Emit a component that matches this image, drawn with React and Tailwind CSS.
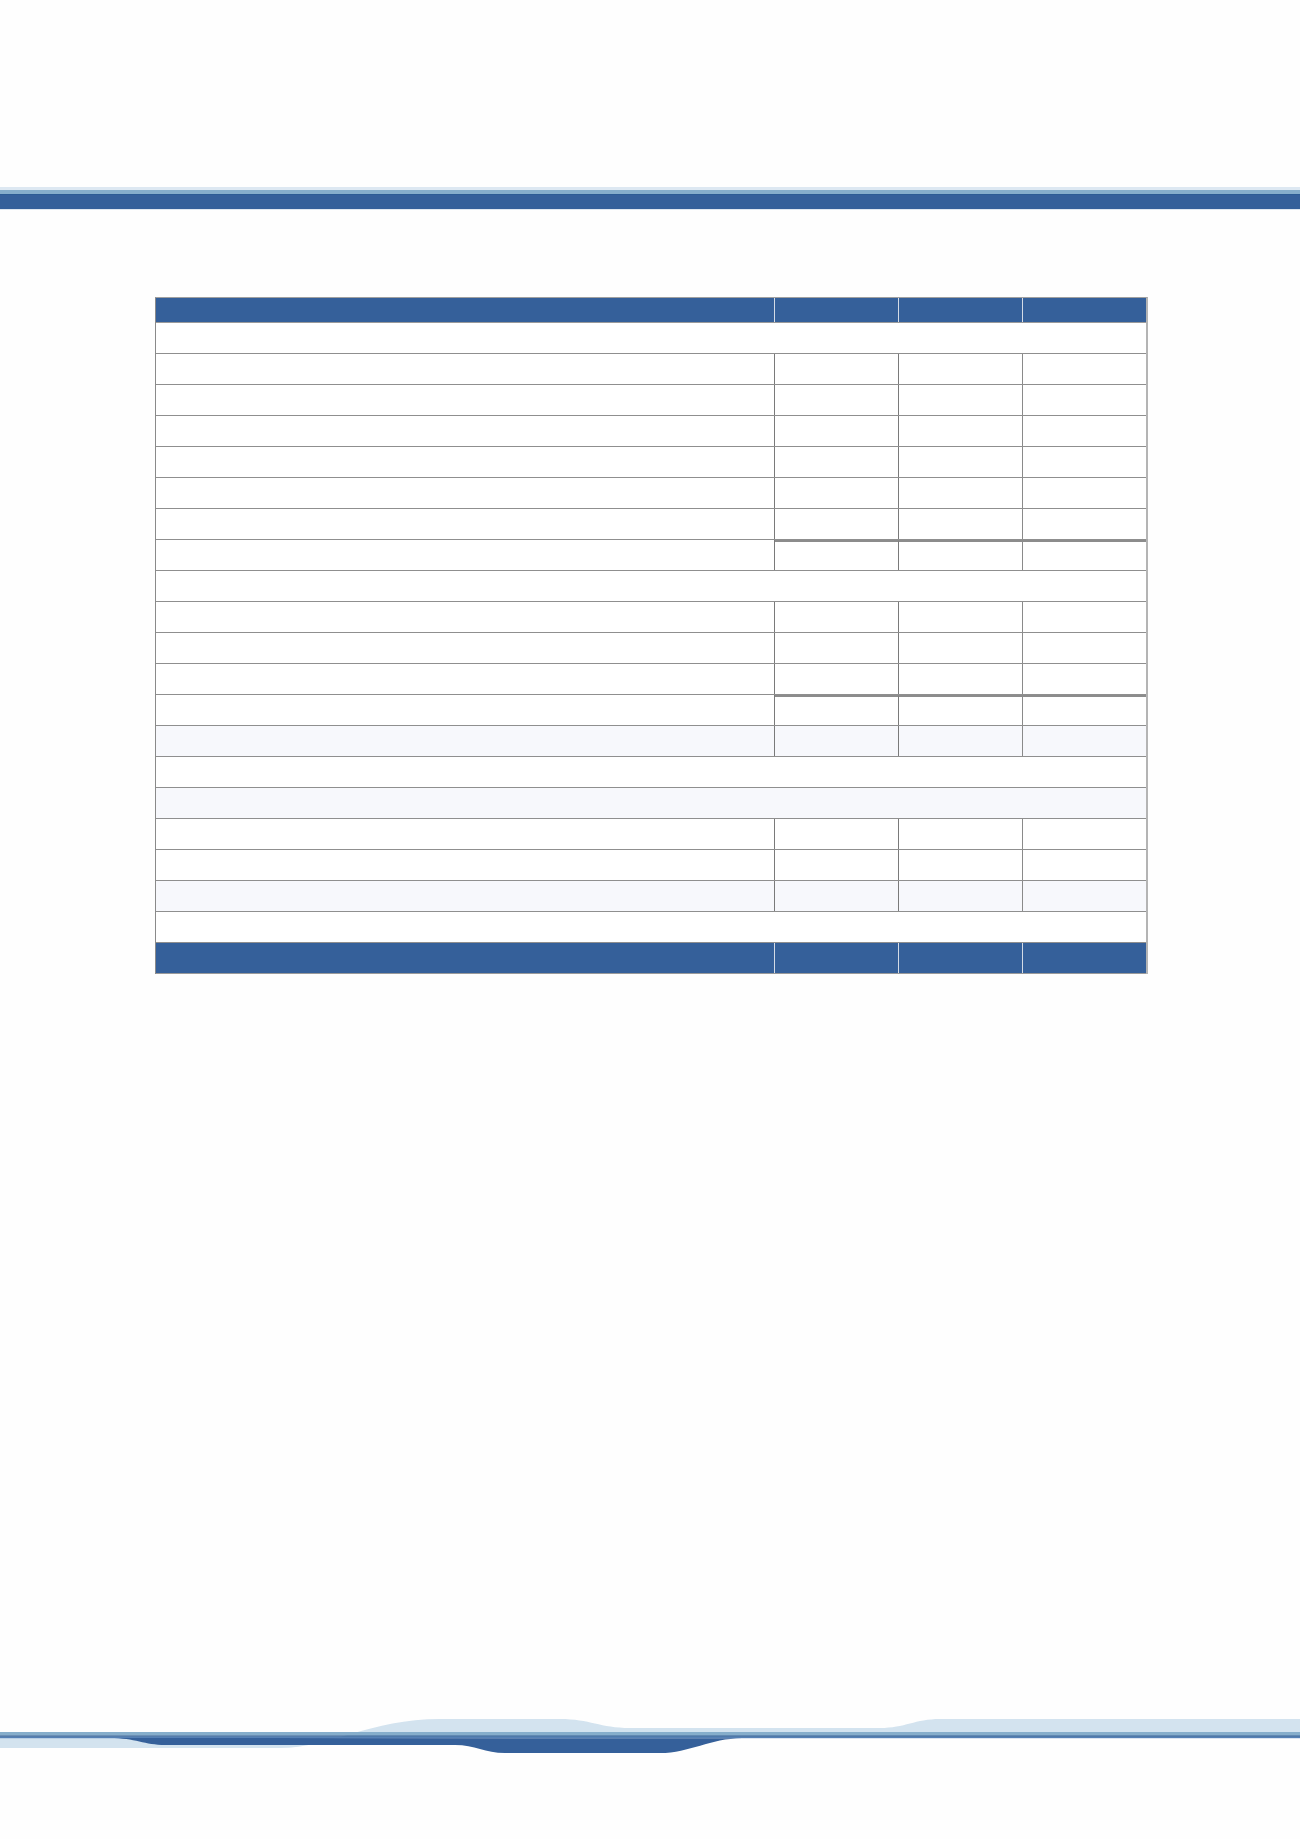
import React from "react";

const rows = [
  { t: "section" },
  { t: "data" },
  { t: "data" },
  { t: "data" },
  { t: "data" },
  { t: "data" },
  { t: "data" },
  { t: "total" },
  { t: "section" },
  { t: "data" },
  { t: "data" },
  { t: "data" },
  { t: "total" },
  { t: "data", shade: true },
  { t: "section" },
  { t: "section", shade: true },
  { t: "data" },
  { t: "data" },
  { t: "data", shade: true },
  { t: "section" },
];

function Row({ r }) {
  const bg = r.shade ? "bg-[#f7f8fc]" : "bg-white";
  if (r.t === "section") {
    return <div className={`h-[31px] border-b border-[#8f8f8f] ${bg}`} />;
  }
  const vt = r.t === "total" ? "border-t-2 border-t-[#8c8c8c]" : "";
  return (
    <div className={`flex h-[31px] border-b border-[#8f8f8f] ${bg}`}>
      <div className="w-[619px] shrink-0 border-r border-[#7a7a7a]" />
      <div className={`w-[124px] shrink-0 border-r border-[#7a7a7a] ${vt}`} />
      <div className={`w-[124px] shrink-0 border-r border-[#8a8a8a] ${vt}`} />
      <div className={`flex-1 ${vt}`} />
    </div>
  );
}

function BlueRow({ h }) {
  return (
    <div className={`flex ${h} bg-[#35609a] border-b border-[#9a9a9a]`}>
      <div className="w-[619px] shrink-0 border-r border-[#d4dbe6]" />
      <div className="w-[124px] shrink-0 border-r border-[#d4dbe6]" />
      <div className="w-[124px] shrink-0 border-r border-[#d4dbe6]" />
      <div className="flex-1" />
    </div>
  );
}

export default function App() {
  return (
    <div className="w-full h-[1839px] bg-[#fefefe] flex flex-col" style={{ fontFamily: "'Liberation Sans', Arial, sans-serif" }}>
      <div className="mt-[187px] flex flex-col">
        <div className="h-[3px] bg-[#dde8f2]" />
        <div className="h-[4px] bg-[#86aecb]" />
        <div className="h-[1px] bg-[#2d5c94]" />
        <div className="h-[14px] bg-[#35609a]" />
        <div className="h-[1px] bg-[#dfe7f0]" />
      </div>

      <div className="mt-[87px] ml-[155px] w-[993px] border-l border-[#8a8a8a] border-r-2 border-r-[#b4b4b4] border-t border-t-[#a0a0a0]">
        <BlueRow h="h-[25px]" />
        {rows.map((r, i) => (
          <Row key={i} r={r} />
        ))}
        <BlueRow h="h-[31px]" />
      </div>

      <div className="mt-auto mb-[69px] w-full">
        <svg width="1300" height="60" viewBox="0 0 1300 60" className="block">
          <path
            d="M0,38 L280,38 C330,38 370,9 440,9 L560,9 C590,9 600,18 630,18 L880,18 C905,18 915,9 940,9 L1300,9 L1300,28 L0,28 Z"
            fill="#d3e3ef"
          />
          <rect x="0" y="22" width="1300" height="3.4" fill="#86aecb" />
          <rect x="0" y="25.4" width="1300" height="1.4" fill="#2d5c94" />
          <rect x="0" y="26.8" width="1300" height="1.4" fill="#5580b5" />
          <path
            d="M110,28 C135,28 145,35 165,35 L455,35 C475,35 485,43 505,43 L660,43 C690,43 710,28.2 742,28.2 Z"
            fill="#35609a"
          />
        </svg>
      </div>
    </div>
  );
}
